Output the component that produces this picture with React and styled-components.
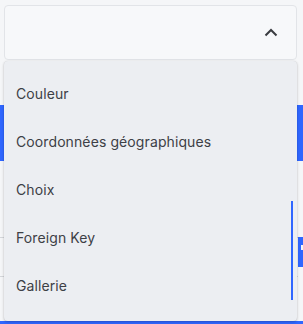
import React from "react";
import styled, { createGlobalStyle } from "styled-components";

const Global = createGlobalStyle`
  html, body { margin: 0; padding: 0; background: #f5f6f8; }
  body { font-family: Inter, "Noto Sans", sans-serif; width: 303px; height: 324px; overflow: hidden; }
`;

const Page = styled.div`
  position: relative;
  display: flex;
  flex-direction: column;
  width: 303px;
  height: 324px;
  padding-top: 5px;
  box-sizing: border-box;
`;

const SelectWrap = styled.div`
  position: relative;
  margin: 0 6px 0 4px;
  z-index: 2;
`;

const SelectBox = styled.div`
  height: 55px;
  box-sizing: border-box;
  border: 1px solid #e2e4e8;
  border-radius: 4px;
  background: #f7f8fa;
  display: flex;
  align-items: center;
  justify-content: flex-end;
  padding-right: 18px;
`;

const Menu = styled.div`
  position: absolute;
  top: 56px;
  left: 0;
  right: 0;
  height: 260px;
  background: #eceef2;
  border-radius: 4px;
  box-shadow: 0 1px 3px rgba(0, 0, 0, 0.22), 0 0 1px rgba(0, 0, 0, 0.12);
  overflow: hidden;
`;

const List = styled.ul`
  list-style: none;
  margin: 0;
  padding: 8px 0 0;
`;

const Item = styled.li`
  height: 48px;
  display: flex;
  align-items: center;
  padding-left: 12px;
  font-size: 14px;
  color: #3d4046;
  letter-spacing: 0.1px;
`;

const Thumb = styled.div`
  position: absolute;
  right: 4px;
  top: 140px;
  width: 2px;
  height: 99px;
  background: #2f66ff;
`;

const Blue = styled.div`
  background: #2f66ff;
  height: ${(p) => p.$h}px;
  margin-top: ${(p) => p.$mt}px;
`;

const FieldRow = styled.div`
  display: flex;
  margin-top: 76px;
  height: 40px;
`;

const Field = styled.div`
  flex: 1;
  border-top: 1px solid #d4d6da;
  border-bottom: 1px solid #d4d6da;
  display: flex;
  align-items: center;
  font-size: 14px;
  color: #777;
  text-indent: -6px;
  overflow: hidden;
`;

const SideButton = styled.div`
  position: relative;
  width: 5px;
  height: 30px;
  background: #2f66ff;
  &::after {
    content: "";
    position: absolute;
    left: 3px;
    top: 8px;
    width: 2px;
    height: 5px;
    background: #f5f6f8;
  }
`;

const items = ["Couleur", "Coordonnées géographiques", "Choix", "Foreign Key", "Gallerie"];

export default function App() {
  return (
    <>
      <Global />
      <Page>
        <SelectWrap>
          <SelectBox>
            <svg width="14" height="10" viewBox="0 0 14 10">
              <polyline points="1.5,7.5 7,2 12.5,7.5" fill="none" stroke="#3a3c40" strokeWidth="2" />
            </svg>
          </SelectBox>
          <Menu>
            <List>
              {items.map((t) => (
                <Item key={t}>{t}</Item>
              ))}
            </List>
            <Thumb />
          </Menu>
        </SelectWrap>
        <Blue $h={56} $mt={45} />
        <FieldRow>
          <Field>r</Field>
          <SideButton />
        </FieldRow>
        <Blue $h={3} $mt={44} />
      </Page>
    </>
  );
}
